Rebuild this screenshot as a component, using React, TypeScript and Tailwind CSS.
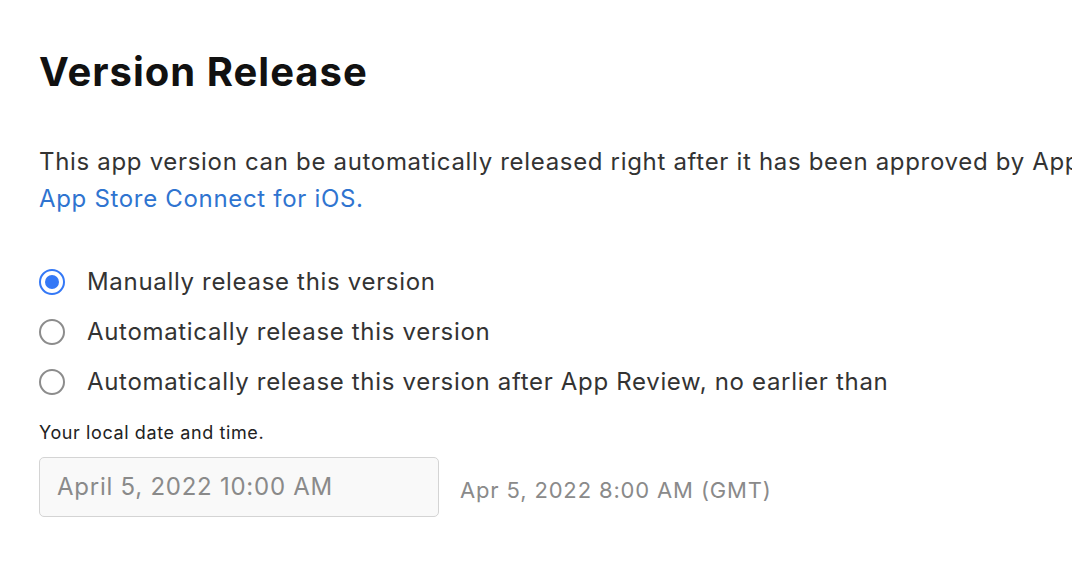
import { useState } from "react";

const options = [
    "Manually release this version",
    "Automatically release this version",
    "Automatically release this version after App Review, no earlier than",
];

function Radio({ checked }: { checked: boolean }) {
    if (checked) {
        return (
            <span className="flex h-[26px] w-[26px] flex-shrink-0 items-center justify-center rounded-full border-[2px] border-[#3478f6] bg-white">
                <span className="h-[14px] w-[14px] rounded-full bg-[#3478f6]" />
            </span>
        );
    }
    return <span className="h-[26px] w-[26px] flex-shrink-0 rounded-full border-[2px] border-[#8c8c8c] bg-white" />;
}

export default function App() {
    const [selected, setSelected] = useState(0);

    return (
        <div className="h-[586px] w-[1072px] overflow-hidden bg-white font-['Inter',sans-serif] text-[#333]">
            <div className="w-[1500px] pl-[39px] pt-[48px]">
                {/* ── Title ── */}
                <h1 className="text-[40px] font-bold leading-[48px] tracking-[1px] text-[#111]">Version Release</h1>

                {/* ── Description ── */}
                <p className="mt-[47px] text-[24px] leading-[37px] tracking-[0.68px] text-[#333]">
                    <span className="whitespace-nowrap">
                        This app version can be automatically released right after it has been approved by App Review.
                    </span>
                    <br />
                    <a className="text-[#2f74d0]">App Store Connect for iOS.</a>
                </p>

                {/* ── Options ── */}
                <div className="mt-[52px] flex flex-col gap-[24px]">
                    {options.map((label, i) => (
                        <button
                            key={label}
                            onClick={() => setSelected(i)}
                            className="flex h-[26px] items-center gap-[22px] text-left"
                        >
                            <Radio checked={selected === i} />
                            <span className="whitespace-nowrap text-[24px] tracking-[0.68px] text-[#333]">{label}</span>
                        </button>
                    ))}
                </div>

                {/* ── Date picker ── */}
                <div className="mt-[26px] text-[18px] leading-[24px] tracking-[0.6px] text-[#222]">Your local date and time.</div>
                <div className="mt-[12px] flex items-center gap-[21px]">
                    <div className="flex h-[60px] w-[400px] items-center rounded-[5px] border border-[#d4d4d4] bg-[#f9f9f9] px-[17px] text-[24px] tracking-[0.75px] text-[#8a8a8a]">
                        April 5, 2022 10:00 AM
                    </div>
                    <div className="pt-[6px] text-[22px] tracking-[0.85px] text-[#8a8a8a]">Apr 5, 2022 8:00 AM (GMT)</div>
                </div>
            </div>
        </div>
    );
}
